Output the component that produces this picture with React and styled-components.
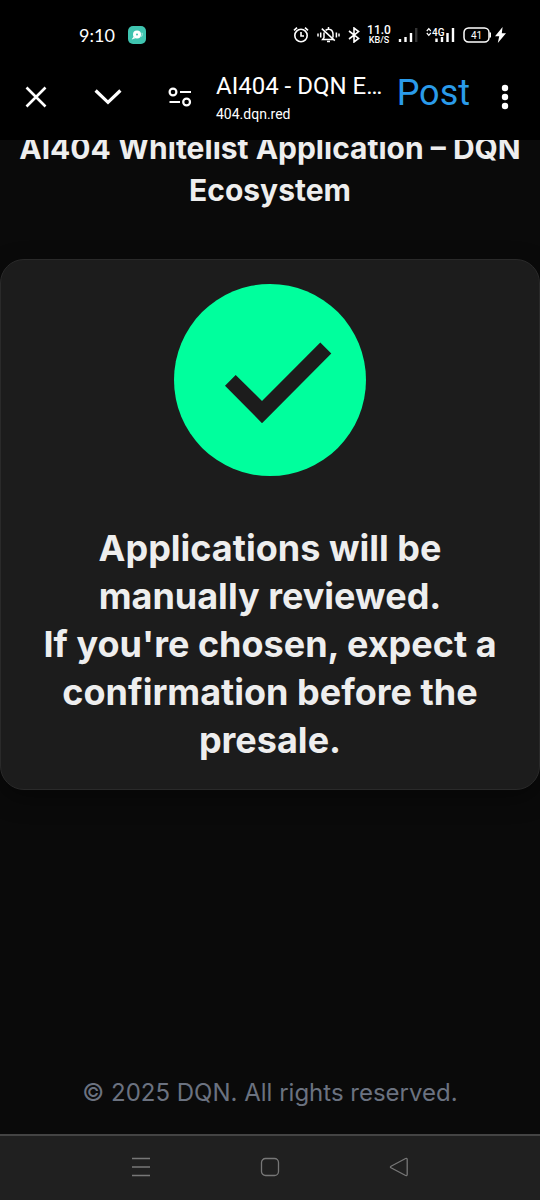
import React from "react";
import styled, { createGlobalStyle } from "styled-components";

const GlobalStyle = createGlobalStyle`
  * {
    box-sizing: border-box;
  }

  body {
    margin: 0;
    background: #0a0a0a;
    font-family: "Inter", sans-serif;
  }
`;

const Screen = styled.div`
  display: flex;
  flex-direction: column;
  min-height: 100vh;
  background: #0a0a0a;
  color: #eeeeee;
`;

const StatusBar = styled.div`
  display: flex;
  align-items: center;
  justify-content: space-between;
  height: 69px;
  padding: 0 34px 0 79px;
  background: #000;
  color: #fff;
`;

const StatusGroup = styled.div`
  display: flex;
  align-items: center;
  gap: ${(props) => props.$gap}px;
`;

const Clock = styled.span`
  font: 18px/20px "Lato", sans-serif;
`;

const Speed = styled.span`
  display: flex;
  flex-direction: column;
  align-items: center;
  width: 22px;
  font: 500 12px/11px "Roboto", sans-serif;
`;

const SpeedUnit = styled.span`
  font-size: 9px;
  line-height: 9px;
`;

const Icon = styled.svg`
  display: block;
  flex: none;
  fill: ${(props) => (props.$solid ? "currentColor" : "none")};
  stroke: ${(props) => (props.$solid ? "none" : "currentColor")};
`;

const BrowserBar = styled.header`
  display: flex;
  align-items: center;
  height: 71px;
  padding: 0 19px 16px 16px;
  background: #000;
  color: #fff;
  font-family: "Roboto", sans-serif;
`;

const IconButton = styled.button`
  display: flex;
  flex: none;
  align-items: center;
  justify-content: center;
  width: ${(props) => props.$width || 40}px;
  height: 40px;
  padding: 0;
  border: 0;
  background: none;
  color: ${(props) => props.$color || "#fff"};
`;

const LeftButtons = styled.div`
  display: flex;
  gap: 32px;
`;

const PageInfo = styled.div`
  flex: 1;
  min-width: 0;
  margin-left: 16px;
  padding-top: 2px;
  white-space: nowrap;
`;

const PageTitle = styled.div`
  font-size: 24px;
  line-height: 28px;
`;

const PageHost = styled.div`
  padding-top: 4px;
  font-size: 14px;
  line-height: 20px;
`;

const PostButton = styled.button`
  height: 48px;
  margin: 0 19px 8px 0;
  padding: 0;
  border: 0;
  background: none;
  color: #2a9bea;
  font: 36px/48px "Roboto", sans-serif;
`;

const Content = styled.main`
  display: flex;
  flex: 1;
  flex-direction: column;
  overflow: hidden;
`;

// page is scrolled a little, so the first line slides under the bar
const Heading = styled.h1`
  margin: -13px 0 48px;
  padding: 0 16px;
  font-size: 30px;
  font-weight: 700;
  line-height: 42px;
  text-align: center;
`;

const Card = styled.section`
  display: flex;
  flex-direction: column;
  align-items: center;
  gap: 48px;
  padding: 24px 24px 25px;
  border: 1px solid #2a2a2a;
  border-radius: 24px;
  background: #1c1c1c;
  box-shadow: 0 8px 24px rgba(0, 0, 0, 0.4);
`;

const Message = styled.p`
  margin: 0;
  font-size: 36px;
  font-weight: 700;
  line-height: 48px;
  text-align: center;
`;

const Footer = styled.footer`
  margin-top: auto;
  padding: 24px;
  color: #6b7280;
  font-size: 24px;
  line-height: 34px;
  text-align: center;
`;

const NavBar = styled.nav`
  display: flex;
  align-items: center;
  justify-content: center;
  gap: 89px;
  height: 66px;
  padding-bottom: 2px;
  border-top: 2px solid #444;
  background: #202020;
`;

const AppBadge = () => (
  <Icon $solid width="20" height="20" viewBox="0 0 20 20">
    <rect x="1" y="1" width="18" height="18" rx="5" fill="#3fc4b0" />
    <circle cx="10" cy="9.6" r="4" />
    <circle cx="10" cy="9.6" r="1" fill="#3fc4b0" />
    <path d="M4.6 14.4l2-2.6 1.6 1.4z" />
    <path d="M15 7.8q.6 2-.4 3.8" fill="none" stroke="#b8ebe3" />
  </Icon>
);

const AlarmIcon = () => (
  <Icon width="16" height="18" viewBox="0 0 16 18" strokeWidth="1.6">
    <circle cx="8" cy="9.5" r="6.2" />
    <path d="M8 6v4h3M1 4.4l3-2.8M15 4.4l-3-2.8" />
  </Icon>
);

const BellOffIcon = () => (
  <Icon width="23" height="18" viewBox="0 0 23 18" strokeWidth="1.5">
    <path d="M8.6 4.4C12 1.6 16 4 16 8v3.4M7 6.6v5L5.6 13.5h10.6M4.8 2.6l13 12M10 15.6h3M11.5 1v2" />
    <path d="M1 7.5v3M3.7 6.5v5M19.4 6.5v5M22 7.5v3" />
  </Icon>
);

const BluetoothIcon = () => (
  <Icon width="12" height="16" viewBox="0 0 12 16" strokeWidth="1.6">
    <path d="M1 4l9.6 7.4L6 15V1l4.6 3.6L1 12" />
  </Icon>
);

const SignalIcon = () => (
  <Icon width="20" height="16" viewBox="0 0 20 16" strokeWidth="2.4">
    <path d="M2 12v3M7.5 10v5M13 6v9" />
    <path d="M18.2 1v14" stroke="#333" />
  </Icon>
);

const MobileDataIcon = () => (
  <Icon width="29" height="16" viewBox="0 0 29 16" strokeWidth="2.4">
    <path d="M10.5 11.5V15M16 10v5M21.5 6v9M27 1v14" />
    <path d="M.8 4l2-2.4 2 2.4M.8 6l2 2.4 2-2.4" strokeWidth="1.2" />
    <text
      x="6"
      y="8.5"
      fill="currentColor"
      stroke="none"
      fontFamily="Roboto, sans-serif"
      fontSize="10"
      fontWeight="500"
    >
      4G
    </text>
  </Icon>
);

const BatteryIcon = () => (
  <Icon width="28" height="16" viewBox="0 0 28 16" strokeWidth="1.5">
    <rect x="1" y="1" width="25" height="14" rx="4.5" />
    <path d="M27.3 5.5v5" />
    <text
      x="13.5"
      y="11.5"
      fill="currentColor"
      stroke="none"
      textAnchor="middle"
      fontFamily="Roboto, sans-serif"
      fontSize="10"
    >
      41
    </text>
  </Icon>
);

const BoltIcon = () => (
  <Icon $solid width="11" height="16" viewBox="0 0 11 16">
    <path d="M7.6 0L0 9.2h4.2L2.8 16 11 6.2H6.8z" />
  </Icon>
);

const CheckBadge = () => (
  <Icon $solid width="192" height="192" viewBox="0 0 192 192">
    <circle cx="96" cy="96" r="96" fill="#00ff9d" />
    <path
      d="M51 101.7L61.7 91 88 117l58.3-58.4 11 10.8L88 139.2z"
      fill="#1c1c1c"
    />
  </Icon>
);

const App = () => (
  <>
    <GlobalStyle />
    <Screen>
      <StatusBar>
        <StatusGroup $gap={12}>
          <Clock>9:10</Clock>
          <AppBadge />
        </StatusGroup>
        <StatusGroup $gap={8}>
          <AlarmIcon />
          <BellOffIcon />
          <BluetoothIcon />
          <Speed>
            11.0
            <SpeedUnit>KB/S</SpeedUnit>
          </Speed>
          <SignalIcon />
          <MobileDataIcon />
          <StatusGroup $gap={4}>
            <BatteryIcon />
            <BoltIcon />
          </StatusGroup>
        </StatusGroup>
      </StatusBar>
      <BrowserBar>
        <LeftButtons>
          <IconButton aria-label="Close">
            <Icon width="22" height="22" viewBox="0 0 22 22" strokeWidth="2.6">
              <path d="M1.5 1.5l19 19M20.5 1.5l-19 19" />
            </Icon>
          </IconButton>
          <IconButton aria-label="Minimize">
            <Icon width="28" height="16" viewBox="0 0 28 16" strokeWidth="3.2">
              <path d="M1.6 1.5L14 13.4 26.4 1.5" />
            </Icon>
          </IconButton>
          <IconButton aria-label="Site settings">
            <Icon width="24" height="20" viewBox="0 0 24 20" strokeWidth="2.2">
              <circle cx="5" cy="5" r="3.4" />
              <circle cx="18.6" cy="15" r="3.4" />
              <path d="M12 5h11M1.5 15h10.5" />
            </Icon>
          </IconButton>
        </LeftButtons>
        <PageInfo>
          <PageTitle>AI404 - DQN E…</PageTitle>
          <PageHost>404.dqn.red</PageHost>
        </PageInfo>
        <PostButton>Post</PostButton>
        <IconButton aria-label="More" $width={32}>
          <Icon $solid width="8" height="26" viewBox="0 0 8 26">
            <circle cx="4" cy="4" r="3.2" />
            <circle cx="4" cy="13" r="3.2" />
            <circle cx="4" cy="22" r="3.2" />
          </Icon>
        </IconButton>
      </BrowserBar>
      <Content>
        <Heading>AI404 Whitelist Application – DQN Ecosystem</Heading>
        <Card>
          <CheckBadge />
          <Message>
            Applications will be manually reviewed.
            <br />
            If you're chosen, expect a confirmation before the presale.
          </Message>
        </Card>
        <Footer>© 2025 DQN. All rights reserved.</Footer>
      </Content>
      <NavBar>
        <IconButton aria-label="Recent apps" $color="#777">
          <Icon width="20" height="20" viewBox="0 0 20 20" strokeWidth="1.5">
            <path d="M1 1.5h18M1 10h18M1 18.5h18" />
          </Icon>
        </IconButton>
        <IconButton aria-label="Home" $color="#777">
          <Icon width="20" height="20" viewBox="0 0 20 20" strokeWidth="1.3">
            <rect x="1.5" y="1.5" width="17" height="17" rx="4" />
          </Icon>
        </IconButton>
        <IconButton aria-label="Back" $color="#777">
          <Icon width="20" height="20" viewBox="0 0 20 20" strokeWidth="1.3">
            <path d="M2 9.2L16.6 1.5q1.6-.5 1.6 1.3v14.4q0 1.8-1.6 1.3L2 10.8q-1.2-.8 0-1.6z" />
          </Icon>
        </IconButton>
      </NavBar>
    </Screen>
  </>
);

export default App;
